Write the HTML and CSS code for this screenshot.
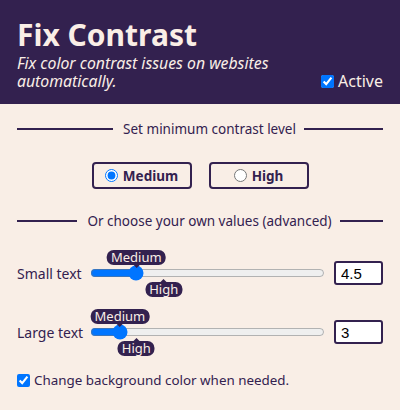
FILE: index.html
```html
<!DOCTYPE html>
<html lang="en">
<head>
<meta charset="utf-8">
<title>Fix Contrast</title>
<link rel="stylesheet" href="styles.css">
</head>
<body>
<header class="header">
  <h1 class="title">Fix Contrast</h1>
  <div class="header-row">
    <p class="subtitle">Fix color contrast issues on websites automatically.</p>
    <label class="active"><input type="checkbox" checked> Active</label>
  </div>
</header>
<main class="main">
  <div class="divider divider-first"><span>Set minimum contrast level</span></div>
  <div class="levels">
    <label class="level"><input type="radio" name="level" checked> Medium</label>
    <label class="level"><input type="radio" name="level"> High</label>
  </div>
  <div class="divider divider-second"><span>Or choose your own values (advanced)</span></div>
  <div class="slider-row slider-row-first">
    <span class="slider-label">Small text</span>
    <div class="slider-wrap">
      <input class="range" type="range" min="1" max="21" step="0.1" value="4.5">
      <span class="tip tip-up" style="left: calc(8px + (100% - 16px) * 0.175)">Medium</span>
      <span class="tip tip-down" style="left: calc(8px + (100% - 16px) * 0.3)">High</span>
    </div>
    <input class="num" type="text" value="4.5">
  </div>
  <div class="slider-row">
    <span class="slider-label">Large text</span>
    <div class="slider-wrap">
      <input class="range" type="range" min="1" max="21" step="0.1" value="3">
      <span class="tip tip-up" style="left: calc(8px + (100% - 16px) * 0.1)">Medium</span>
      <span class="tip tip-down" style="left: calc(8px + (100% - 16px) * 0.175)">High</span>
    </div>
    <input class="num" type="text" value="3">
  </div>
  <label class="bg-option"><input type="checkbox" checked> Change background color when needed.</label>
</main>
</body>
</html>
```
FILE: styles.css
```css
html, body {
  margin: 0;
  padding: 0;
}
body {
  background: #f9eee6;
  color: #33214f;
  font-family: "Noto Sans", "Open Sans", sans-serif;
  width: 400px;
  height: 410px;
  overflow: hidden;
}
.header {
  background: #33214f;
  color: #faeee6;
  padding: 17px 17px 14px;
  height: 104px;
  box-sizing: border-box;
}
.title {
  margin: 0;
  font-size: 30px;
  line-height: 36px;
  font-weight: 700;
}
.header-row {
  display: flex;
  align-items: flex-end;
  justify-content: space-between;
  margin-top: 1px;
}
.subtitle {
  margin: 0;
  font-style: italic;
  font-size: 15.8px;
  line-height: 18px;
  width: 270px;
}
.active {
  display: flex;
  align-items: center;
  font-size: 16px;
  line-height: 18px;
  gap: 4px;
}
.active input {
  margin: 0;
  width: 13px;
  height: 13px;
}
.main {
  padding: 0 17px;
}
.divider {
  display: flex;
  align-items: center;
  font-size: 13.5px;
  line-height: 20px;
}
.divider::before {
  content: "";
  flex: 1 1 17px;
  height: 2px;
  background: #33214f;
  margin-right: 10px;
}
.divider::after {
  content: "";
  flex: 1 1 0;
  height: 2px;
  background: #33214f;
  margin-left: 8px;
}
.divider-first {
  margin-top: 15px;
}
.levels {
  display: flex;
  justify-content: center;
  gap: 17px;
  margin-top: 23px;
}
.level {
  width: 100px;
  height: 27px;
  box-sizing: border-box;
  border: 2px solid #33214f;
  border-radius: 4px;
  display: flex;
  align-items: center;
  justify-content: center;
  gap: 4px;
  font-weight: 700;
  font-size: 13.5px;
}
.level input {
  margin: 0 1px 0 0;
  width: 13px;
  height: 13px;
}
.divider-second {
  margin-top: 22px;
}
.slider-row {
  display: flex;
  align-items: center;
}
.slider-row-first {
  margin-top: 30px;
}
.slider-row + .slider-row {
  margin-top: 35px;
}
.slider-label {
  width: 73px;
  font-size: 14px;
}
.slider-wrap {
  position: relative;
  flex: 1;
  display: flex;
}
.range {
  margin: 0;
  width: 100%;
}
.tip {
  position: absolute;
  transform: translateX(-50%);
  background: #33214f;
  color: #faeee6;
  font-size: 13px;
  line-height: 15px;
  padding: 0 4px;
  border-radius: 7px;
  white-space: nowrap;
}
.tip::after {
  content: "";
  position: absolute;
  left: 50%;
  margin-left: -3px;
  border: 3px solid transparent;
}
.tip-up {
  bottom: 16px;
}
.tip-up::after {
  top: 100%;
  border-top-color: #33214f;
}
.tip-down {
  top: 17px;
}
.tip-down::after {
  bottom: 100%;
  border-bottom-color: #33214f;
}
.num {
  margin-left: 9px;
  width: 49px;
  height: 24px;
  box-sizing: border-box;
  border: 2px solid #33214f;
  border-radius: 3px;
  background: #fff;
  font-family: "Liberation Sans", Arial, sans-serif;
  font-size: 15px;
  padding: 0 5px;
  color: #000;
}
.bg-option {
  display: flex;
  align-items: center;
  gap: 4px;
  margin-top: 27px;
  font-size: 13.4px;
}
.bg-option input {
  margin: 0;
  width: 13px;
  height: 13px;
}
```
